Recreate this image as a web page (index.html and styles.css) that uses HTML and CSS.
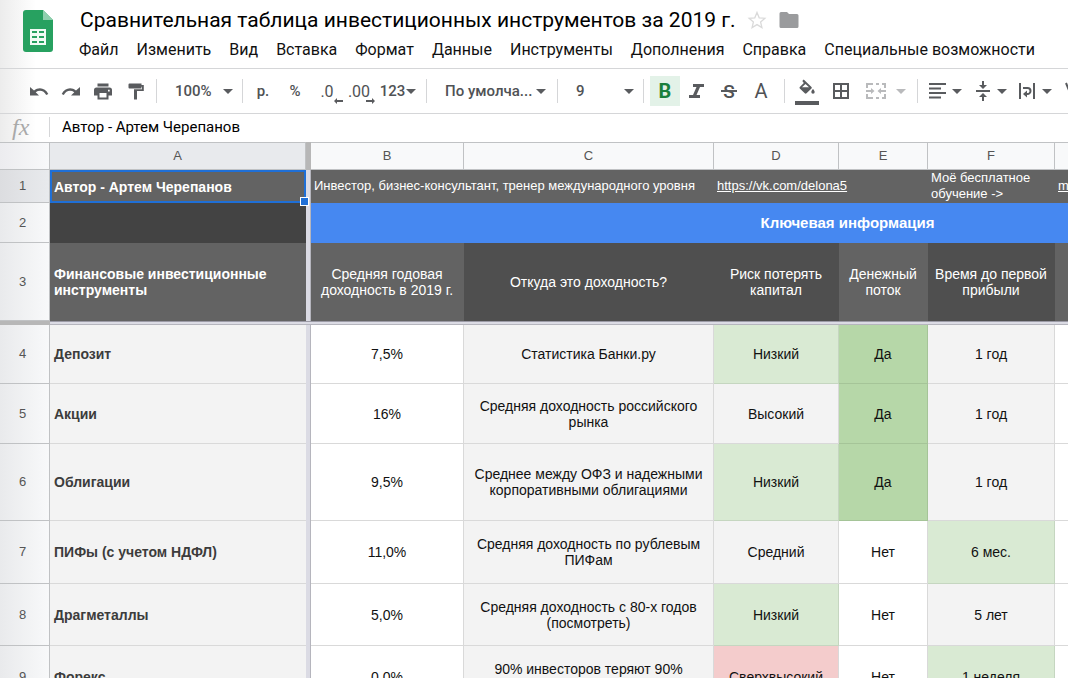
FILE: index.html
```html
<!DOCTYPE html>
<html lang="ru">
<head>
<meta charset="utf-8">
<title>Сравнительная таблица инвестиционных инструментов за 2019 г.</title>
<link rel="stylesheet" href="styles.css">
</head>
<body>
<div class="app">
  <header class="header">
    <svg class="logo" viewBox="0 0 30 42" aria-hidden="true">
      <path class="logo-page" d="M3 0h17l10 10v29a3 3 0 0 1-3 3H3a3 3 0 0 1-3-3V3a3 3 0 0 1 3-3z"/>
      <path class="logo-fold" d="M20 0l10 10H20z"/>
      <path class="logo-grid" fill-rule="evenodd" d="M7 19h16v16H7zM9 21v2h5v-2zM16 21v2h5v-2zM9 26v2h5v-2zM16 26v2h5v-2zM9 31v2h5v-2zM16 31v2h5v-2z"/>
    </svg>
    <div class="heading">
      <div class="title-row">
        <h1 class="title">Сравнительная таблица инвестиционных инструментов за 2019 г.</h1>
        <button class="plain star" aria-label="Пометить"><svg width="20" height="20" viewBox="0 0 20 20"><path d="M10 2.500l2.200 5.300 5.700.5-4.300 3.700 1.300 5.600-4.900-3-4.900 3 1.300-5.600L2.100 8.300l5.700-.5z" fill="none" stroke="#dadada" stroke-width="1.300"/></svg></button>
        <button class="plain" aria-label="Переместить"><svg width="20" height="18" viewBox="0 0 20 18"><path d="M2 1h6l2 2h8a1.500 1.500 0 0 1 1.500 1.500v11A1.500 1.500 0 0 1 18 17H2a1.500 1.500 0 0 1-1.500-1.500v-13A1.500 1.500 0 0 1 2 1z" fill="#9a9b9d"/></svg></button>
      </div>
      <nav class="menu">
        <button class="plain">Файл</button>
        <button class="plain">Изменить</button>
        <button class="plain">Вид</button>
        <button class="plain">Вставка</button>
        <button class="plain">Формат</button>
        <button class="plain">Данные</button>
        <button class="plain">Инструменты</button>
        <button class="plain">Дополнения</button>
        <button class="plain">Справка</button>
        <button class="plain">Специальные возможности</button>
      </nav>
    </div>
  </header>

  <div class="toolbar" role="toolbar">
    <div class="group">
      <button class="tool" aria-label="Отменить"><svg width="20" height="20" viewBox="0 0 20 20"><path d="M1 6v8.500h9L6.700 11.200C10.500 8.500 15 9.500 17.200 14L19.300 13C16.500 7 10 5.300 5 9.400z"/></svg></button>
      <button class="tool" aria-label="Повторить"><svg width="20" height="20" viewBox="0 0 20 20"><path d="M19 6v8.500h-9l3.300-3.300C9.500 8.500 5 9.500 2.800 14L.7 13C3.500 7 10 5.300 15 9.400z"/></svg></button>
      <button class="tool" aria-label="Печать"><svg width="20" height="20" viewBox="0 0 20 20"><path fill-rule="evenodd" d="M4.500 2.500h11v3h-11zM3.500 6.500h13A2.500 2.500 0 0 1 19 9v5.500h-3.500v4h-11v-4H1V9A2.500 2.500 0 0 1 3.500 6.500zM6.500 12v4.500h7V12zM15 8.700v1.700h1.700V8.700z"/></svg></button>
      <button class="tool" aria-label="Копировать форматирование"><svg width="20" height="20" viewBox="0 0 20 20"><path d="M4.500 2.500h12V4h2.300v6H12v8.500H9V8.200h8V5.800h-.5v1.700h-12A1 1 0 0 1 3.500 6.500v-3a1 1 0 0 1 1-1z"/></svg></button>
    </div>
    <span class="sep"></span>
    <label class="pick zoom"><select aria-label="Масштаб"><option>100%</option></select><i class="caret"></i></label>
    <span class="sep"></span>
    <div class="group numbers">
      <button class="tool text">р.</button>
      <button class="tool text">%</button>
      <button class="tool text digits" aria-label="Уменьшить число знаков">.0<svg class="arrow" width="9" height="6" viewBox="0 0 9 6"><path d="M0 3l3-3v2h6v2H3v2z"/></svg></button>
      <button class="tool text digits" aria-label="Увеличить число знаков">.00<svg class="arrow" width="9" height="6" viewBox="0 0 9 6"><path d="M9 3L6 0v2H0v2h6v2z"/></svg></button>
      <button class="tool text more">123<i class="caret"></i></button>
    </div>
    <span class="sep"></span>
    <label class="pick family"><select aria-label="Шрифт"><option>По умолча...</option></select><i class="caret"></i></label>
    <span class="sep"></span>
    <label class="pick size"><select aria-label="Размер шрифта"><option>9</option></select><i class="caret"></i></label>
    <span class="sep"></span>
    <div class="group format">
      <button class="tool bold" aria-pressed="true">B</button>
      <button class="tool" aria-label="Курсив"><svg width="20" height="20" viewBox="0 0 20 20"><path d="M6 3h11v3h-4l-3.500 8H13v3H2v-3h4l3.500-8H6z"/></svg></button>
      <button class="tool strike">S</button>
      <button class="tool color">A</button>
    </div>
    <span class="sep"></span>
    <div class="group fills">
      <button class="tool" aria-label="Цвет заливки"><svg width="26" height="28" viewBox="0 0 26 28"><path fill-rule="evenodd" d="M8.300 4l1.400-1.400 7.800 7.400a1 1 0 0 1 0 1.400l-5 4.800a1.200 1.200 0 0 1-1.700 0L5.800 11.400a1 1 0 0 1 0-1.400l4-4zM11.500 7L8 10.300h7z"/><path d="M19 12s1.700 1.900 1.700 3.100a1.700 1.700 0 0 1-3.400 0C17.300 13.900 19 12 19 12zM1 24h24v4H1z"/></svg></button>
      <button class="tool" aria-label="Границы"><svg width="18" height="18" viewBox="0 0 18 18"><path fill="none" stroke="#595b5e" stroke-width="2" d="M2 2h14v14H2zM9 2v14M2 9h14"/></svg></button>
      <button class="tool merge" aria-label="Объединить ячейки" disabled><svg width="20" height="18" viewBox="0 0 20 18"><path fill="none" stroke="#b9babc" stroke-width="2" d="M1 6V2h6M10 2h3M16 2h3v4M1 12v4h6M10 16h3M16 16h3v-4M0 9h6M14 9h6"/><path fill="#b9babc" d="M5 6l3.500 3L5 12zM15 6l-3.500 3 3.500 3z"/></svg><i class="caret"></i></button>
    </div>
    <span class="sep"></span>
    <div class="group aligns">
      <button class="tool drop" aria-label="Выравнивание по горизонтали"><svg width="20" height="20" viewBox="0 0 20 20"><path d="M1 2h17v2H1zM1 6.500h12v2H1zM1 11h17v2H1zM1 15.500h12v2H1z"/></svg><i class="caret"></i></button>
      <button class="tool drop" aria-label="Выравнивание по вертикали"><svg width="20" height="20" viewBox="0 0 20 20"><path d="M3 9h14v2H3zM9 0h2v4h3l-4 4-4-4h3zM9 20h2v-4h3l-4-4-4 4h3z"/></svg><i class="caret"></i></button>
      <button class="tool drop" aria-label="Перенос текста"><svg width="20" height="20" viewBox="0 0 20 20"><path d="M1 2h2v16H1zM15 2h2v16h-2z"/><path fill="none" stroke="#595b5e" stroke-width="2" d="M5 7h4.500a2.800 2.800 0 0 1 0 6H8"/><path d="M9 9.500v7L5 13z"/></svg><i class="caret"></i></button>
      <button class="tool drop" aria-label="Поворот текста"><svg width="20" height="20" viewBox="0 0 20 20"><path fill="none" stroke="#595b5e" stroke-width="2" d="M3 2l5 12 5-12"/></svg><i class="caret"></i></button>
    </div>
  </div>

  <div class="formula">
    <label class="fx" for="formula">fx</label>
    <input id="formula" class="formula-input" value="Автор - Артем Черепанов">
  </div>

  <main class="sheet">
    <table class="grid">
      <colgroup><col class="w-num"><col class="w-a"><col class="w-freeze"><col class="w-b"><col class="w-c"><col class="w-d"><col class="w-e"><col class="w-f"><col class="w-g"></colgroup>
      <thead>
        <tr class="letters"><th class="corner"></th><th class="active">A</th><th class="bar-head"></th><th>B</th><th>C</th><th>D</th><th>E</th><th>F</th><th></th></tr>
      </thead>
      <tbody class="frozen">
        <tr class="r1"><th class="num active">1</th><td class="name selected">Автор - Артем Черепанов<span class="handle"></span></td><td class="bar"></td><td class="left" colspan="2">Инвестор, бизнес-консультант, тренер международного уровня</td><td class="left" colspan="2"><a href="https://vk.com/delona5">https://vk.com/delona5</a></td><td class="left">Моё бесплатное обучение -&gt;</td><td class="left"><a href="#">m</a></td></tr>
        <tr class="r2"><th class="num">2</th><td class="black"></td><td class="bar"></td><td class="blue" colspan="6">Ключевая информация</td></tr>
        <tr class="r3"><th class="num">3</th><td class="name">Финансовые инвестиционные инструменты</td><td class="bar"></td><td>Средняя годовая доходность в 2019 г.</td><td class="dark">Откуда это доходность?</td><td class="dark">Риск потерять капитал</td><td>Денежный поток</td><td class="dark">Время до первой прибыли</td><td></td></tr>
        <tr class="rule"><th class="bar-head"></th><td class="bar" colspan="8"></td></tr>
      </tbody>
      <tbody class="data">
        <tr class="r4"><th class="num">4</th><td class="name">Депозит</td><td class="bar"></td><td>7,5%</td><td class="gray">Статистика Банки.ру</td><td class="green">Низкий</td><td class="deep">Да</td><td class="gray">1 год</td><td></td></tr>
        <tr class="r5"><th class="num">5</th><td class="name">Акции</td><td class="bar"></td><td>16%</td><td class="gray">Средняя доходность российского рынка</td><td class="gray">Высокий</td><td class="deep">Да</td><td class="gray">1 год</td><td></td></tr>
        <tr class="r6"><th class="num">6</th><td class="name">Облигации</td><td class="bar"></td><td>9,5%</td><td class="gray">Среднее между ОФЗ и надежными корпоративными облигациями</td><td class="green">Низкий</td><td class="deep">Да</td><td class="gray">1 год</td><td></td></tr>
        <tr class="r7"><th class="num">7</th><td class="name">ПИФы (с учетом НДФЛ)</td><td class="bar"></td><td>11,0%</td><td class="gray">Средняя доходность по рублевым ПИФам</td><td class="gray">Средний</td><td>Нет</td><td class="green">6 мес.</td><td></td></tr>
        <tr class="r8"><th class="num">8</th><td class="name">Драгметаллы</td><td class="bar"></td><td>5,0%</td><td class="gray">Средняя доходность с 80-х годов (посмотреть)</td><td class="green">Низкий</td><td>Нет</td><td class="gray">5 лет</td><td></td></tr>
        <tr class="r9"><th class="num">9</th><td class="name">Форекс</td><td class="bar"></td><td>0,0%</td><td class="gray">90% инвесторов теряют 90% депозита</td><td class="red">Сверхвысокий</td><td>Нет</td><td class="green">1 неделя</td><td></td></tr>
      </tbody>
    </table>
  </main>
</div>
</body>
</html>
```

FILE: styles.css
```css
* { box-sizing: border-box; }

body {
  margin: 0;
  background: #fff;
  color: #111;
  font-family: Roboto, "Noto Sans", sans-serif;
  overflow: hidden;
}

.app {
  display: flex;
  flex-direction: column;
  height: 100vh;
  overflow: hidden;
  background: linear-gradient(to right, #ececec, #fff 36px);
}

button, select, input {
  font: inherit;
  color: inherit;
  border: 0;
  padding: 0;
  margin: 0;
  background: none;
}

.header {
  display: flex;
  flex: none;
  gap: 26px;
  height: 69px;
  padding: 6px 0 0 23px;
  border-bottom: 1px solid #d5d6d8;
}

.logo { flex: none; width: 30px; height: 42px; margin-top: 4px; }
.logo-page { fill: #27a160; }
.logo-fold { fill: #8fd0ae; }
.logo-grid { fill: #f1fbf5; }

.heading { min-width: 0; }
.title-row { display: flex; align-items: center; height: 28px; padding-left: 1px; }
.title { margin: 0; color: #000; font-size: 21px; font-weight: 400; line-height: 28px; white-space: nowrap; }
.plain { display: block; flex: none; white-space: nowrap; }
.plain svg { display: block; }
.star { margin: 0 12px 0 11px; }

.menu { display: flex; gap: 18px; padding-top: 6px; font-size: 16px; line-height: 20px; }

.toolbar {
  display: flex;
  flex: none;
  align-items: center;
  height: 45px;
  padding-left: 23px;
  border-bottom: 1px solid #d5d6d8;
  color: #505255;
  font-size: 15px;
  font-weight: 500;
  overflow: hidden;
}

.group { display: flex; flex: none; align-items: center; }
.sep { flex: none; width: 1px; height: 24px; background: #d5d6d8; }
.tool { display: flex; flex: none; align-items: center; justify-content: center; width: 32px; height: 30px; }
.tool svg { flex: none; fill: #595b5e; }
.group + .sep { margin-left: 5px; }
.caret { flex: none; border: 5px solid transparent; border-top-color: #595b5e; border-bottom: 0; }
.pick { display: flex; flex: none; align-items: center; justify-content: space-between; padding: 0 9px 0 18px; }
.pick select { appearance: none; }
.zoom { width: 85px; }
.family { width: 130px; padding-right: 11px; }
.size { width: 85px; }
.numbers { padding-left: 4px; }
.digits { position: relative; font-size: 16px; font-weight: 400; }
.arrow { position: absolute; right: 0; bottom: 2px; }
.more { width: 46px; gap: 1px; }
.format { gap: 2px; padding: 0 3px 0 6px; }
.format .tool { width: 30px; }
.bold { background: #e3f2e8; color: #1a7f3c; font-size: 20px; font-weight: 700; }
.strike { position: relative; font-size: 19px; }
.strike::after { content: ""; position: absolute; top: 14px; left: 7px; right: 7px; height: 2px; background: #595b5e; }
.color { font-size: 20px; font-weight: 400; }
.fills { gap: 4px; padding-left: 7px; }
.fills .tool { width: 30px; }
.fills .merge { width: 52px; gap: 10px; }
.merge .caret { border-top-color: #b9babc; }
.aligns { padding-left: 4px; }
.drop { width: 45px; gap: 4px; }

.formula { display: flex; flex: none; align-items: center; height: 28px; padding-bottom: 3px; }
.fx { flex: none; width: 50px; padding-left: 12px; border-right: 1px solid #d5d6d8; color: #a9a9a9; font: italic 24px/20px "Liberation Serif", serif; }
.formula-input { flex: 1; padding-left: 12px; color: #000; font-size: 15px; line-height: 24px; outline: 0; }

.sheet { flex: 1; min-height: 0; overflow: hidden; font-family: "Liberation Sans", Arial, sans-serif; }

.grid { width: 1385px; table-layout: fixed; border-collapse: separate; border-spacing: 0; font-size: 14px; line-height: 16px; }
.w-num { width: 50px; }
.w-a { width: 256px; }
.w-freeze { width: 5px; }
.w-b { width: 153px; }
.w-c { width: 250px; }
.w-d { width: 125px; }
.w-e { width: 89px; }
.w-f { width: 127px; }
.w-g { width: 330px; }

.grid th, .grid td { padding: 0 4px; vertical-align: middle; text-align: center; }
.grid th { font-weight: 400; color: #555; }
.grid td { border-right: 1px solid #d9d9d9; border-bottom: 1px solid #d9d9d9; }
.letters { height: 28px; font-size: 13px; }
.letters th { background: #f8f9fa; border: 1px solid #c0c2c4; border-left: 0; }
.letters .corner { background: linear-gradient(to right, #ececef, #f8f9fa); }
.grid .letters .active { background: #e8eaed; }
.grid .num { font-size: 13px; padding-right: 8px; background: linear-gradient(to right, #e9eaec, #f8f9fa); border-right: 1px solid #c0c2c4; border-bottom: 1px solid #c0c2c4; }
.grid .num.active { background: linear-gradient(to right, #dcdde0, #e8eaed); }
.grid .bar-head { padding: 0; background: #b7b7b7; border-color: #b7b7b7; }
.grid .bar { padding: 0; background: #dbdbe4; border: 0; border-right: 1px solid #b5b5bd; }

.grid .name { text-align: left; font-weight: 700; background: #f3f3f3; color: #3c3c3c; border-right: 0; }
.frozen td { color: #fff; background: #636363; border-color: #636363; }
.frozen .name { color: #fff; background: #636363; }
.grid .left { text-align: left; padding-left: 3px; font-size: 13px; }
.frozen a { color: #fff; }
.frozen .dark { background: #4f4f4f; border-color: #4f4f4f; }
.frozen .black { background: #434343; border-color: #434343; }
.frozen .blue { background: #4688f1; border-color: #4688f1; font-size: 15px; font-weight: 700; }
.grid .selected { position: relative; border: 2px solid #1f6fd6; padding: 0 2px; }
.handle { position: absolute; right: -5px; bottom: -5px; width: 9px; height: 9px; background: #1f6fd6; border: 1px solid #fff; }

.r1 { height: 33px; }
.r2 { height: 40px; }
.r3 { height: 78px; }
.rule { height: 4px; font-size: 0; line-height: 0; }
.grid .rule .bar { border-top: 1px solid #9c9ba6; border-bottom: 1px solid #b5b5bd; }
.r4 { height: 59px; }
.r5 { height: 60px; }
.r6 { height: 77px; }
.r7 { height: 63px; }
.r8 { height: 62px; }
.r9 { height: 62px; }

.data .gray { background: #f3f3f3; }
.data .green { background: #d9ead3; border-color: #c5d6c0; }
.data .deep { background: #b6d7a8; border-color: #a5c498; }
.data .red { background: #f4cccc; }
```
